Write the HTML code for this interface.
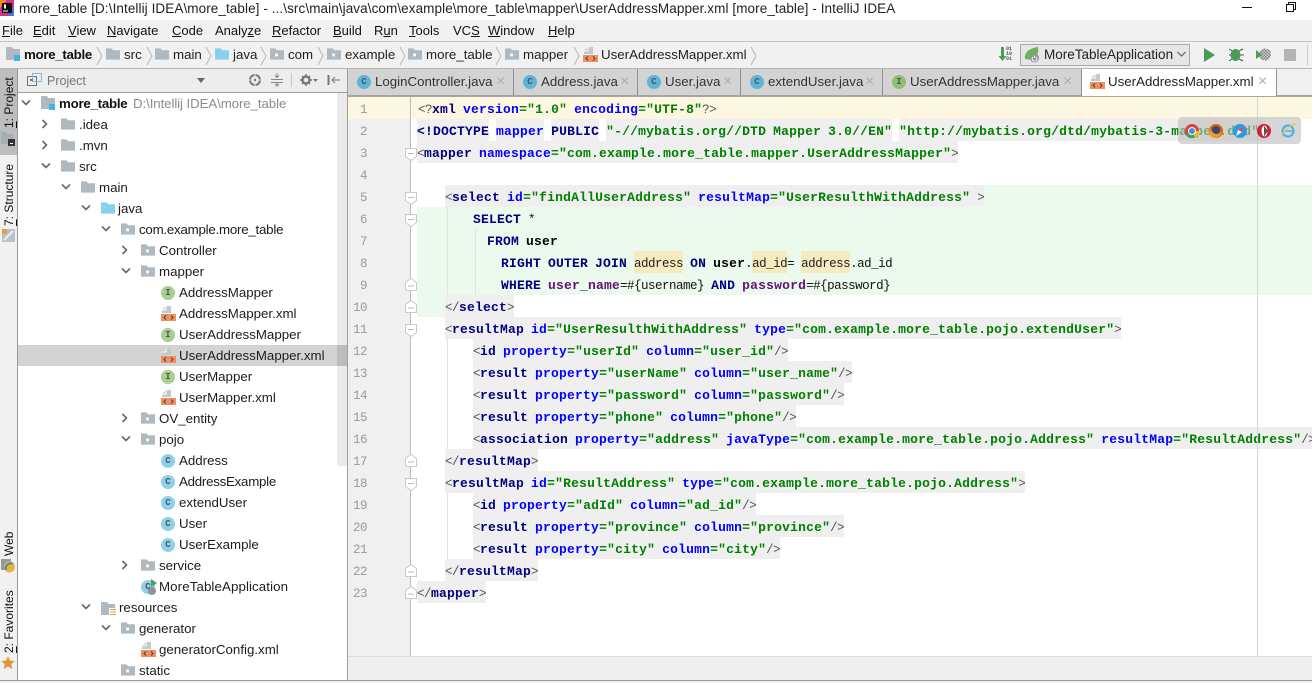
<!DOCTYPE html>
<html><head><meta charset="utf-8"><style>
html,body{margin:0;padding:0}
body{width:1312px;height:683px;overflow:hidden;position:relative;background:#fff;font-family:"Liberation Sans",sans-serif;color:#111}
.a{position:absolute}
.m{position:absolute;top:20px;height:21px;line-height:21px;font-size:13px;color:#111;white-space:pre}
.m u{text-decoration:underline}
.bc{position:absolute;top:42px;height:26px;line-height:26px;font-size:13.3px;color:#222;white-space:pre}
.sep{position:absolute;top:46px}
.tt{position:absolute;top:71px;height:22px;line-height:22px;font-size:13.3px;color:#333;white-space:pre}
.x{position:absolute;top:71px;line-height:22px;font-size:16px;color:#adadad}
.r{position:absolute;height:21px;line-height:21px;font-size:13.3px;color:#1c1c1c;white-space:pre}
.ic{position:absolute;width:14px;height:14px;border-radius:50%;font:bold 9px/14px "Liberation Mono",monospace;text-align:center;color:#555}
.C{background:#8fd1ea}
.I{background:#a5d08f}
.ln{position:absolute;left:348px;width:19px;height:22px;text-align:right;font:12.5px/24px "Liberation Mono",monospace;letter-spacing:-.5px;color:#999}
.c{position:absolute;left:417px;height:22px;white-space:pre;font:bold 13px/26px "Liberation Mono",monospace;letter-spacing:.2px;word-spacing:-1px;color:#000080}
.c span{display:inline-block;height:22px;vertical-align:top}
.g{background:#efefef}
i{font-style:normal}
.p,.t,.o{font-weight:normal;font-size:12.5px;letter-spacing:-.5px;word-spacing:0}
.p{color:#555}
.n{color:#000080}
.e{color:#0000ff}
.s{color:#008000}
.t{color:#111}
.k{color:#000}
.v{color:#660e7a}
.o{background:#f6ebbf;color:#222}
.f{position:absolute;left:405px}
.gd{position:absolute;width:1px;background:#e2e2e2}
.vt{position:absolute;left:2px;width:15px;writing-mode:vertical-rl;transform:rotate(180deg);font-size:12px;line-height:15px;color:#111;white-space:pre;text-align:left}
</style></head><body>
<svg width="0" height="0" style="position:absolute"><defs>
<symbol id="fo" viewBox="0 0 15 12"><path d="M0 0h6l1.5 2H15v10H0z" fill="#b0b9bf"/></symbol>
<symbol id="pk" viewBox="0 0 15 12"><path d="M0 0h6l1.5 2H15v10H0z" fill="#b0b9bf"/><rect x="5.5" y="5.5" width="3" height="3" fill="#fff"/></symbol>
<symbol id="bl" viewBox="0 0 15 12"><path d="M0 0h6l1.5 2H15v10H0z" fill="#87d0ee"/></symbol>
<symbol id="mo" viewBox="0 0 15 15"><path d="M0 0h6l1.5 2H14v11H0z" fill="#b0b9bf"/><rect x="8" y="8" width="6" height="6" fill="#40b6e0"/></symbol>
<symbol id="xm" viewBox="0 0 15 15"><path d="M5 0h5v7H1V4z" fill="#c3c8cc"/><path d="M5 0v4H1" fill="none" stroke="#fff"/><rect y="8" width="15" height="7" fill="#f0905f"/><path d="M5 9.5l-2 2 2 2M10 9.5l2 2-2 2" stroke="#444" fill="none"/></symbol>
<symbol id="rt" viewBox="0 0 8 10"><path d="M1.5 1l4 4-4 4" stroke="#666" stroke-width="1.6" fill="none"/></symbol>
<symbol id="dn" viewBox="0 0 10 8"><path d="M1 1.5l4 4 4-4" stroke="#666" stroke-width="1.6" fill="none"/></symbol>
<symbol id="fd" viewBox="0 0 12 18"><path d="M.5 .5h11v8l-5.500 4-5.500-4z" fill="#fff" stroke="#c9c9c9"/><path d="M3 5.500h6" stroke="#bbb"/></symbol>
<symbol id="fu" viewBox="0 0 12 18"><path d="M.5 13.500h11v-8l-5.500-4-5.500 4z" fill="#fff" stroke="#c9c9c9"/><path d="M3 9h6" stroke="#bbb"/></symbol>
<symbol id="ch" viewBox="0 0 8 20"><path d="M1 1l5 9-5 9" stroke="#b5b5b5" fill="none"/></symbol>
<pattern id="chk" width="3" height="3" patternUnits="userSpaceOnUse"><rect width="3" height="3" fill="#d8d8d8"/><rect width="1.500" height="1.500" fill="#777"/><rect x="1.500" y="1.500" width="1.500" height="1.500" fill="#777"/></pattern>
</defs></svg>

<!-- title bar -->
<svg class="a" style="left:0;top:0" width="14" height="16" viewBox="0 0 14 16"><rect x="0" y="0" width="14" height="16" fill="#d0318a"/><path d="M0 0h7L0 8z" fill="#f08a24"/><path d="M14 16V6l-6 10z" fill="#3a7be0"/><rect x="2" y="3" width="10" height="10" fill="#111"/><rect x="3" y="10.500" width="5" height="1" fill="#fff"/><rect x="4" y="4.500" width="2" height="4" fill="#fff"/></svg>
<div class="a" style="left:19px;top:0;height:17px;line-height:17px;font-size:13.5px;letter-spacing:.085px;color:#222;white-space:pre">more_table [D:\Intellij IDEA\more_table] - ...\src\main\java\com\example\more_table\mapper\UserAddressMapper.xml [more_table] - IntelliJ IDEA</div>
<div class="a" style="left:1242px;top:7px;width:10px;height:1px;background:#111"></div>
<svg class="a" style="left:1286px;top:2px" width="10" height="10"><path d="M.5 2.500h7v7h-7zM2.500 2.500v-2h7v7h-2" fill="#fff" stroke="#111"/></svg>

<!-- menu -->
<div class="a" style="left:0;top:20px;width:1312px;height:21px;background:#f1f1f1;border-bottom:1px solid #c5c5c5"></div>
<div class="m" style="left:2px"><u>F</u>ile</div>
<div class="m" style="left:33px"><u>E</u>dit</div>
<div class="m" style="left:68px"><u>V</u>iew</div>
<div class="m" style="left:107px"><u>N</u>avigate</div>
<div class="m" style="left:172px"><u>C</u>ode</div>
<div class="m" style="left:215px">Analy<u>z</u>e</div>
<div class="m" style="left:272px"><u>R</u>efactor</div>
<div class="m" style="left:333px"><u>B</u>uild</div>
<div class="m" style="left:374px">R<u>u</u>n</div>
<div class="m" style="left:409px"><u>T</u>ools</div>
<div class="m" style="left:453px">VC<u>S</u></div>
<div class="m" style="left:488px"><u>W</u>indow</div>
<div class="m" style="left:548px"><u>H</u>elp</div>

<!-- breadcrumb -->
<div class="a" style="left:0;top:42px;width:1312px;height:26px;background:#f1f1f1;border-bottom:1px solid #b5b5b5"></div>
<svg class="a" style="left:6px;top:47px" width="15" height="15"><use href="#mo"/></svg>
<div class="bc" style="left:24px;font-weight:bold;color:#111;letter-spacing:-.3px">more_table</div>
<svg class="sep" style="left:96px" width="8" height="20"><use href="#ch"/></svg>
<svg class="a" style="left:106px;top:48px" width="14" height="12"><use href="#fo"/></svg>
<div class="bc" style="left:124px">src</div>
<svg class="sep" style="left:146px" width="8" height="20"><use href="#ch"/></svg>
<svg class="a" style="left:155px;top:48px" width="14" height="12"><use href="#fo"/></svg>
<div class="bc" style="left:173px">main</div>
<svg class="sep" style="left:205px" width="8" height="20"><use href="#ch"/></svg>
<svg class="a" style="left:215px;top:48px" width="14" height="12"><use href="#bl"/></svg>
<div class="bc" style="left:233px">java</div>
<svg class="sep" style="left:260px" width="8" height="20"><use href="#ch"/></svg>
<svg class="a" style="left:270px;top:48px" width="14" height="12"><use href="#pk"/></svg>
<div class="bc" style="left:288px">com</div>
<svg class="sep" style="left:317px" width="8" height="20"><use href="#ch"/></svg>
<svg class="a" style="left:327px;top:48px" width="14" height="12"><use href="#pk"/></svg>
<div class="bc" style="left:345px">example</div>
<svg class="sep" style="left:399px" width="8" height="20"><use href="#ch"/></svg>
<svg class="a" style="left:408px;top:48px" width="14" height="12"><use href="#pk"/></svg>
<div class="bc" style="left:426px">more_table</div>
<svg class="sep" style="left:495px" width="8" height="20"><use href="#ch"/></svg>
<svg class="a" style="left:505px;top:48px" width="14" height="12"><use href="#pk"/></svg>
<div class="bc" style="left:523px">mapper</div>
<svg class="sep" style="left:573px" width="8" height="20"><use href="#ch"/></svg>
<svg class="a" style="left:583px;top:47px" width="15" height="15"><use href="#xm"/></svg>
<div class="bc" style="left:601px">UserAddressMapper.xml</div>
<svg class="sep" style="left:750px" width="8" height="20"><use href="#ch"/></svg>

<!-- toolbar right -->
<svg class="a" style="left:998px;top:46px" width="16" height="17"><path d="M3 1h3v9h2.500L4.500 15 .5 10H3z" fill="#4a9e55"/></svg>
<div class="a" style="left:1006px;top:47px;font:bold 5px/5px 'Liberation Mono',monospace;color:#555;white-space:pre">01
10
01</div>
<div class="a" style="left:1020px;top:44px;width:168px;height:20px;background:#e6e6e6;border:1px solid #a9a9a9"></div>
<svg class="a" style="left:1024px;top:47px" width="16" height="16"><path d="M1 12C0 5 6 1 14 0c1 7-2 12-6 13z" fill="#6cb35a"/><circle cx="10.500" cy="11" r="4.500" fill="#8a9499"/><path d="M10.500 8.500v2.500M8.800 10a2.400 2.400 0 1 0 3.400 0" stroke="#fff" fill="none"/></svg>
<div class="a" style="left:1044px;top:44px;height:22px;line-height:22px;font-size:13.5px;color:#222;white-space:pre">MoreTableApplication</div>
<svg class="a" style="left:1177px;top:51px" width="9" height="7"><path d="M.5 1l4 4 4-4" stroke="#555" fill="none"/></svg>
<svg class="a" style="left:1203px;top:48px" width="13" height="14"><path d="M1 0l11 7-11 7z" fill="#499c54"/></svg>
<svg class="a" style="left:1229px;top:47px" width="15" height="15"><ellipse cx="6.500" cy="8" rx="5" ry="6" fill="#499c54"/><path d="M10 4l4-2M11 8h4M10 12l4 2M3 4L0 2M2 8H0M3 12l-3 2" stroke="#555"/></svg>
<svg class="a" style="left:1256px;top:47px" width="15" height="15"><circle cx="9" cy="7.500" r="6" fill="url(#chk)"/><path d="M0 3l6 4.500L0 12z" fill="#499c54"/></svg>
<div class="a" style="left:1284px;top:49px;width:12px;height:12px;background:#b4b4b4"></div>
<div class="a" style="left:1307px;top:45px;width:1px;height:21px;background:#cfcfcf"></div>

<!-- left strip -->
<div class="a" style="left:0;top:69px;width:17px;height:611px;background:#f1f1f1;border-right:1px solid #9a9a9a"></div>
<div class="a" style="left:0;top:69px;width:17px;height:86px;background:#bdbdbd"></div>
<div class="vt" style="top:78px;height:50px"><u>1</u>: Project</div>
<svg class="a" style="left:1px;top:132px" width="14" height="14"><path d="M0 0h5l1 2h6v10H0z" fill="#a4aeb5"/><rect x="7" y="7" width="7" height="7" fill="#333"/><rect x="9" y="11" width="3" height="1" fill="#fff"/></svg>
<div class="vt" style="top:164px;height:62px"><u>7</u>: Structure</div>
<svg class="a" style="left:2px;top:229px" width="13" height="13"><rect width="13" height="13" fill="#b7c2c9"/><rect width="5" height="5" fill="#e0a040"/><path d="M2 11L11 2" stroke="#eee" stroke-width="2"/></svg>
<div class="vt" style="top:532px;height:24px">Web</div>
<svg class="a" style="left:1px;top:559px" width="14" height="14"><rect x="0" y="0" width="10" height="11" fill="#999"/><circle cx="8.500" cy="8" r="5.500" fill="#e8b53a"/><path d="M5 11a5 5 0 0 1 7-6" stroke="#3a8fc0" stroke-width="2" fill="none"/></svg>
<div class="vt" style="top:593px;height:60px"><u>2</u>: Favorites</div>
<svg class="a" style="left:1px;top:656px" width="14" height="13"><path d="M7 0l2 4.500 5 .5-3.700 3.300 1 4.700L7 10.500 2.700 13l1-4.700L0 5l5-.5z" fill="#e2973c"/></svg>

<!-- project panel header -->
<div class="a" style="left:18px;top:69px;width:329px;height:23px;background:#ededed;border-bottom:1px solid #9f9f9f"></div>
<svg class="a" style="left:27px;top:73px" width="15" height="14"><rect x=".5" y="3.500" width="9" height="9" fill="#eee" stroke="#777"/><rect x="5.500" y=".5" width="9" height="8" fill="none" stroke="#8bb6d6"/><path d="M3 6h3v2H3z" fill="#777"/></svg>
<div class="a" style="left:47px;top:70px;height:22px;line-height:22px;font-size:12.500px;color:#777">Project</div>
<svg class="a" style="left:197px;top:78px" width="8" height="5"><path d="M0 0h8L4 5z" fill="#666"/></svg>
<svg class="a" style="left:248px;top:73px" width="14" height="14"><circle cx="7" cy="7" r="5" fill="none" stroke="#777" stroke-width="2"/><path d="M7 0v4M7 10v4M0 7h4M10 7h4" stroke="#ededed" stroke-width="1"/><circle cx="7" cy="7" r="1.200" fill="#777"/></svg>
<svg class="a" style="left:270px;top:73px" width="14" height="14"><path d="M1 6.500h12M1 9.500h12" stroke="#888"/><path d="M7 0v4M5 2.500l2 2 2-2M7 15v-4M5 12.500l2-2 2 2" stroke="#888" fill="none"/></svg>
<div class="a" style="left:291px;top:73px;width:1px;height:14px;background:#c8c8c8"></div>
<svg class="a" style="left:300px;top:74px" width="18" height="12"><circle cx="6" cy="6" r="3.500" fill="none" stroke="#777" stroke-width="2.400"/><path d="M6 0v2M6 10v2M0 6h2M10 6h2M2 2l1.500 1.500M10 2L8.500 3.500M2 10l1.500-1.500M10 10L8.500 8.500" stroke="#777" stroke-width="1.400"/><path d="M13 5h5l-2.500 3z" fill="#777"/></svg>
<svg class="a" style="left:327px;top:74px" width="13" height="12"><path d="M1.500 1v10" stroke="#777" stroke-width="2"/><path d="M5 6h8M8 3L5 6l3 3" stroke="#777" fill="none"/></svg>
<div class="a" style="left:347px;top:69px;width:1px;height:611px;background:#9f9f9f"></div>

<!-- tree -->
<div class="a" style="left:18px;top:345px;width:329px;height:21px;background:#d3d3d3"></div>
<div class="a" style="left:337px;top:93px;width:10px;height:373px;background:#ebebeb"></div>
<div class="a" style="left:337px;top:345px;width:10px;height:21px;background:#bcbcbc"></div>

<svg class="a" style="left:21px;top:99px" width="10" height="8"><use href="#dn"/></svg>
<svg class="a" style="left:41px;top:96px" width="15" height="15"><use href="#mo"/></svg>
<div class="r" style="left:59px;top:93px;font-weight:bold;color:#111;letter-spacing:-.25px">more_table</div>
<div class="r" style="left:133px;top:93px;color:#8c8c8c;letter-spacing:-.1px">D:\Intellij IDEA\more_table</div>

<svg class="a" style="left:41px;top:119px" width="8" height="10"><use href="#rt"/></svg>
<svg class="a" style="left:61px;top:118px" width="14" height="12"><use href="#fo"/></svg>
<div class="r" style="left:79px;top:114px">.idea</div>
<svg class="a" style="left:41px;top:140px" width="8" height="10"><use href="#rt"/></svg>
<svg class="a" style="left:61px;top:139px" width="14" height="12"><use href="#fo"/></svg>
<div class="r" style="left:79px;top:135px">.mvn</div>
<svg class="a" style="left:41px;top:162px" width="10" height="8"><use href="#dn"/></svg>
<svg class="a" style="left:61px;top:160px" width="14" height="12"><use href="#fo"/></svg>
<div class="r" style="left:79px;top:156px">src</div>
<svg class="a" style="left:61px;top:183px" width="10" height="8"><use href="#dn"/></svg>
<svg class="a" style="left:81px;top:181px" width="14" height="12"><use href="#fo"/></svg>
<div class="r" style="left:99px;top:177px">main</div>
<svg class="a" style="left:81px;top:204px" width="10" height="8"><use href="#dn"/></svg>
<svg class="a" style="left:101px;top:202px" width="14" height="12"><use href="#bl"/></svg>
<div class="r" style="left:118px;top:198px">java</div>
<svg class="a" style="left:101px;top:225px" width="10" height="8"><use href="#dn"/></svg>
<svg class="a" style="left:121px;top:223px" width="14" height="12"><use href="#pk"/></svg>
<div class="r" style="left:139px;top:219px;letter-spacing:-.23px">com.example.more_table</div>
<svg class="a" style="left:121px;top:245px" width="8" height="10"><use href="#rt"/></svg>
<svg class="a" style="left:141px;top:244px" width="14" height="12"><use href="#pk"/></svg>
<div class="r" style="left:159px;top:240px">Controller</div>
<svg class="a" style="left:121px;top:267px" width="10" height="8"><use href="#dn"/></svg>
<svg class="a" style="left:141px;top:265px" width="14" height="12"><use href="#pk"/></svg>
<div class="r" style="left:159px;top:261px">mapper</div>

<div class="ic I" style="left:161px;top:286px">I</div><div class="r" style="left:179px;top:282px">AddressMapper</div>
<svg class="a" style="left:161px;top:306px" width="15" height="15"><use href="#xm"/></svg><div class="r" style="left:179px;top:303px">AddressMapper.xml</div>
<div class="ic I" style="left:161px;top:328px">I</div><div class="r" style="left:179px;top:324px">UserAddressMapper</div>
<svg class="a" style="left:161px;top:348px" width="15" height="15"><use href="#xm"/></svg><div class="r" style="left:179px;top:345px">UserAddressMapper.xml</div>
<div class="ic I" style="left:161px;top:370px">I</div><div class="r" style="left:179px;top:366px">UserMapper</div>
<svg class="a" style="left:161px;top:390px" width="15" height="15"><use href="#xm"/></svg><div class="r" style="left:179px;top:387px">UserMapper.xml</div>

<svg class="a" style="left:121px;top:413px" width="8" height="10"><use href="#rt"/></svg>
<svg class="a" style="left:141px;top:412px" width="14" height="12"><use href="#pk"/></svg>
<div class="r" style="left:159px;top:408px">OV_entity</div>
<svg class="a" style="left:121px;top:435px" width="10" height="8"><use href="#dn"/></svg>
<svg class="a" style="left:141px;top:433px" width="14" height="12"><use href="#pk"/></svg>
<div class="r" style="left:159px;top:429px">pojo</div>

<div class="ic C" style="left:161px;top:454px">C</div><div class="r" style="left:179px;top:450px">Address</div>
<div class="ic C" style="left:161px;top:475px">C</div><div class="r" style="left:179px;top:471px;letter-spacing:-.25px">AddressExample</div>
<div class="ic C" style="left:161px;top:496px">C</div><div class="r" style="left:179px;top:492px">extendUser</div>
<div class="ic C" style="left:161px;top:517px">C</div><div class="r" style="left:179px;top:513px">User</div>
<div class="ic C" style="left:161px;top:538px">C</div><div class="r" style="left:179px;top:534px">UserExample</div>

<svg class="a" style="left:121px;top:560px" width="8" height="10"><use href="#rt"/></svg>
<svg class="a" style="left:141px;top:559px" width="14" height="12"><use href="#pk"/></svg>
<div class="r" style="left:159px;top:555px">service</div>
<div class="ic C" style="left:141px;top:580px">C</div>
<svg class="a" style="left:147px;top:578px" width="10" height="18"><path d="M4 1l6 4-6 4z" fill="#4aa54a"/><circle cx="5" cy="13" r="4" fill="#8a9499"/></svg>
<div class="r" style="left:159px;top:576px;letter-spacing:.1px">MoreTableApplication</div>

<svg class="a" style="left:81px;top:603px" width="10" height="8"><use href="#dn"/></svg>
<svg class="a" style="left:101px;top:602px" width="15" height="14"><path d="M0 0h6l1.500 2H14v11H0z" fill="#b0b9bf"/><rect x="8" y="6" width="7" height="8" fill="#fff"/><path d="M9 7.500h6M9 10h6M9 12.500h6" stroke="#d5a04c"/></svg>
<div class="r" style="left:119px;top:597px">resources</div>
<svg class="a" style="left:101px;top:624px" width="10" height="8"><use href="#dn"/></svg>
<svg class="a" style="left:121px;top:622px" width="14" height="12"><use href="#pk"/></svg>
<div class="r" style="left:139px;top:618px">generator</div>
<svg class="a" style="left:141px;top:642px" width="15" height="15"><use href="#xm"/></svg>
<div class="r" style="left:159px;top:639px">generatorConfig.xml</div>
<svg class="a" style="left:121px;top:664px" width="14" height="12"><use href="#pk"/></svg>
<div class="r" style="left:139px;top:660px">static</div>

<!-- tabs -->
<div class="a" style="left:348px;top:69px;width:964px;height:26px;background:#f1f1f1"></div>
<div class="a" style="left:348px;top:69px;width:733px;height:26px;background:#d3d3d3"></div>
<div class="a" style="left:348px;top:95px;width:964px;height:2px;background:#a5a5a5"></div>
<div class="a" style="left:513px;top:69px;width:1px;height:26px;background:#8f8f8f"></div>
<div class="a" style="left:637px;top:69px;width:1px;height:26px;background:#8f8f8f"></div>
<div class="a" style="left:740px;top:69px;width:1px;height:26px;background:#8f8f8f"></div>
<div class="a" style="left:882px;top:69px;width:1px;height:26px;background:#8f8f8f"></div>
<div class="a" style="left:1081px;top:69px;width:194px;height:27px;background:#fff;border-left:1px solid #8f8f8f;border-right:1px solid #8f8f8f"></div>
<div class="ic C" style="left:357px;top:75px;background:#5db5d8">C</div><div class="tt" style="left:375px">LoginController.java</div><div class="x" style="left:496px">×</div>
<div class="ic C" style="left:523px;top:75px;background:#5db5d8">C</div><div class="tt" style="left:541px">Address.java</div><div class="x" style="left:620px">×</div>
<div class="ic C" style="left:647px;top:75px;background:#5db5d8">C</div><div class="tt" style="left:665px">User.java</div><div class="x" style="left:723px">×</div>
<div class="ic C" style="left:750px;top:75px;background:#5db5d8">C</div><div class="tt" style="left:768px">extendUser.java</div><div class="x" style="left:865px">×</div>
<div class="ic I" style="left:892px;top:75px;background:#8fbf74">I</div><div class="tt" style="left:910px">UserAddressMapper.java</div><div class="x" style="left:1063px">×</div>
<svg class="a" style="left:1090px;top:74px" width="15" height="15"><use href="#xm"/></svg><div class="tt" style="left:1108px;color:#222">UserAddressMapper.xml</div><div class="x" style="left:1258px">×</div>

<!-- gutter -->
<div class="a" style="left:348px;top:97px;width:62px;height:559px;background:#f0f0f0"></div>
<div class="a" style="left:348px;top:97px;width:964px;height:22px;background:#fdf7e2"></div>
<div class="a" style="left:410px;top:97px;width:1px;height:559px;background:#bdbdbd"></div>
<div class="a" style="left:348px;top:656px;width:964px;height:1px;background:#dedede"></div>
<div class="a" style="left:348px;top:657px;width:964px;height:23px;background:#efefef"></div>
<div class="a" style="left:0;top:680px;width:1312px;height:1px;background:#999"></div>
<div class="a" style="left:0;top:681px;width:1312px;height:2px;background:#f1f1f1"></div>

<!-- green -->
<div class="a" style="left:417px;top:207px;width:895px;height:88px;background:#ebfaec"></div>
<div class="a" style="left:984px;top:185px;width:328px;height:22px;background:#ebfaec"></div>
<div class="a" style="left:417px;top:295px;width:28px;height:22px;background:#ebfaec"></div>

<!-- line numbers -->
<div class="ln" style="top:98px">1</div><div class="ln" style="top:120px">2</div><div class="ln" style="top:142px">3</div><div class="ln" style="top:164px">4</div><div class="ln" style="top:186px">5</div><div class="ln" style="top:208px">6</div><div class="ln" style="top:230px">7</div><div class="ln" style="top:252px">8</div><div class="ln" style="top:274px">9</div><div class="ln" style="top:296px">10</div><div class="ln" style="top:318px">11</div><div class="ln" style="top:340px">12</div><div class="ln" style="top:362px">13</div><div class="ln" style="top:384px">14</div><div class="ln" style="top:406px">15</div><div class="ln" style="top:428px">16</div><div class="ln" style="top:450px">17</div><div class="ln" style="top:472px">18</div><div class="ln" style="top:494px">19</div><div class="ln" style="top:516px">20</div><div class="ln" style="top:538px">21</div><div class="ln" style="top:560px">22</div><div class="ln" style="top:582px">23</div>

<!-- indent guides -->
<div class="gd" style="left:447px;top:207px;height:88px"></div>
<div class="gd" style="left:475px;top:229px;height:66px"></div>
<div class="gd" style="left:447px;top:339px;height:110px"></div>
<div class="gd" style="left:447px;top:493px;height:66px"></div>

<!-- code -->
<div class="c" style="top:97px;left:418px"><i class="p">&lt;?</i><i class="n">xml</i> <i class="e">version</i><i class="s">="1.0"</i> <i class="e">encoding</i><i class="s">="UTF-8"</i><i class="p">?&gt;</i></div>
<div class="c" style="top:119px"><span class="g">&lt;!DOCTYPE</span> <span class="g e">mapper</span> <span class="g n">PUBLIC</span> <span class="g s">"-//mybatis.org//DTD Mapper 3.0//EN"</span> <span class="g s">"http://mybatis.org/dtd/mybatis-3-mapper.dtd"</span><span class="g p">&gt;</span></div>
<div class="c" style="top:141px"><span class="g"><i class="p">&lt;</i>mapper <i class="e">namespace</i><i class="s">="com.example.more_table.mapper.UserAddressMapper"</i><i class="p">&gt;</i></span></div>
<div class="c" style="top:185px">    <span class="g"><i class="p">&lt;</i>select <i class="e">id</i><i class="s">="findAllUserAddress"</i> <i class="e">resultMap</i><i class="s">="UserResulthWithAddress"</i> <i class="p">&gt;</i></span></div>
<div class="c" style="top:207px">        SELECT <i class="t">*</i></div>
<div class="c" style="top:229px">          FROM <i class="k">user</i></div>
<div class="c" style="top:251px">            RIGHT OUTER JOIN <span class="o">address</span> ON <i class="k">user</i><i class="t">.</i><span class="o">ad_id</span><i class="t">= </i><span class="o">address</span><i class="t">.ad_id</i></div>
<div class="c" style="top:273px">            WHERE <i class="v">user_name</i><i class="t">=#{username}</i> AND <i class="v">password</i><i class="t">=#{password}</i></div>
<div class="c" style="top:295px">    <span class="g"><i class="p">&lt;/</i>select<i class="p">&gt;</i></span></div>
<div class="c" style="top:317px">    <span class="g"><i class="p">&lt;</i>resultMap <i class="e">id</i><i class="s">="UserResulthWithAddress"</i> <i class="e">type</i><i class="s">="com.example.more_table.pojo.extendUser"</i><i class="p">&gt;</i></span></div>
<div class="c" style="top:339px">        <span class="g"><i class="p">&lt;</i>id <i class="e">property</i><i class="s">="userId"</i> <i class="e">column</i><i class="s">="user_id"</i><i class="p">/&gt;</i></span></div>
<div class="c" style="top:361px">        <span class="g"><i class="p">&lt;</i>result <i class="e">property</i><i class="s">="userName"</i> <i class="e">column</i><i class="s">="user_name"</i><i class="p">/&gt;</i></span></div>
<div class="c" style="top:383px">        <span class="g"><i class="p">&lt;</i>result <i class="e">property</i><i class="s">="password"</i> <i class="e">column</i><i class="s">="password"</i><i class="p">/&gt;</i></span></div>
<div class="c" style="top:405px">        <span class="g"><i class="p">&lt;</i>result <i class="e">property</i><i class="s">="phone"</i> <i class="e">column</i><i class="s">="phone"</i><i class="p">/&gt;</i></span></div>
<div class="c" style="top:427px">        <span class="g"><i class="p">&lt;</i>association <i class="e">property</i><i class="s">="address"</i> <i class="e">javaType</i><i class="s">="com.example.more_table.pojo.Address"</i> <i class="e">resultMap</i><i class="s">="ResultAddress"</i><i class="p">/&gt;</i></span></div>
<div class="c" style="top:449px">    <span class="g"><i class="p">&lt;/</i>resultMap<i class="p">&gt;</i></span></div>
<div class="c" style="top:471px">    <span class="g"><i class="p">&lt;</i>resultMap <i class="e">id</i><i class="s">="ResultAddress"</i> <i class="e">type</i><i class="s">="com.example.more_table.pojo.Address"</i><i class="p">&gt;</i></span></div>
<div class="c" style="top:493px">        <span class="g"><i class="p">&lt;</i>id <i class="e">property</i><i class="s">="adId"</i> <i class="e">column</i><i class="s">="ad_id"</i><i class="p">/&gt;</i></span></div>
<div class="c" style="top:515px">        <span class="g"><i class="p">&lt;</i>result <i class="e">property</i><i class="s">="province"</i> <i class="e">column</i><i class="s">="province"</i><i class="p">/&gt;</i></span></div>
<div class="c" style="top:537px">        <span class="g"><i class="p">&lt;</i>result <i class="e">property</i><i class="s">="city"</i> <i class="e">column</i><i class="s">="city"</i><i class="p">/&gt;</i></span></div>
<div class="c" style="top:559px">    <span class="g"><i class="p">&lt;/</i>resultMap<i class="p">&gt;</i></span></div>
<div class="c" style="top:581px"><span class="g"><i class="p">&lt;/</i>mapper<i class="p">&gt;</i></span></div>

<!-- fold markers -->
<svg class="f" style="top:148px" width="12" height="18"><use href="#fd"/></svg>
<svg class="f" style="top:192px" width="12" height="18"><use href="#fd"/></svg>
<svg class="f" style="top:214px" width="12" height="18"><use href="#fd"/></svg>
<svg class="f" style="top:277px" width="12" height="18"><use href="#fu"/></svg>
<svg class="f" style="top:299px" width="12" height="18"><use href="#fu"/></svg>
<svg class="f" style="top:324px" width="12" height="18"><use href="#fd"/></svg>
<svg class="f" style="top:453px" width="12" height="18"><use href="#fu"/></svg>
<svg class="f" style="top:478px" width="12" height="18"><use href="#fd"/></svg>
<svg class="f" style="top:563px" width="12" height="18"><use href="#fu"/></svg>
<svg class="f" style="top:585px" width="12" height="18"><use href="#fu"/></svg>

<!-- right margin -->
<div class="a" style="left:1257px;top:97px;width:1px;height:559px;background:#d6d6d6"></div>

<!-- browser popup -->
<div class="a" style="left:1178px;top:117px;width:123px;height:27px;background:rgba(190,190,190,.62);border-radius:4px"></div>
<svg class="a" style="left:1184px;top:123px" width="112" height="16" viewBox="0 0 112 16">
<circle cx="8" cy="8" r="7" fill="#db4437"/><path d="M8 8L2 12a7 7 0 0 0 9 2.500z" fill="#3aa757"/><path d="M8 8l3 6.500A7 7 0 0 0 15 8z" fill="#f4c20d"/><circle cx="8" cy="8" r="3.500" fill="#4a90e2" stroke="#fff"/>
<circle cx="32" cy="8" r="7" fill="#e66000"/><circle cx="32" cy="7" r="4" fill="#2a4a8f"/><path d="M26 5c2 6 7 8 12 4-1 6-10 8-13 2z" fill="#f79a1c"/>
<circle cx="56" cy="8" r="7" fill="#2a9ae8"/><path d="M60 3l-6 4-2 6 6-4z" fill="#fff"/><path d="M60 3l-6 4 4 2z" fill="#e8433c"/>
<circle cx="80" cy="8" r="7" fill="#d3202f"/><ellipse cx="80.500" cy="8" rx="3" ry="5.500" fill="#fff"/><path d="M80 2.500l4 5.500-4 5.500z" fill="#555"/>
<circle cx="104" cy="8" r="5.500" fill="none" stroke="#4ab3e8" stroke-width="2.200"/><path d="M100 8h9" stroke="#4ab3e8" stroke-width="1.500"/><path d="M98 14c-1-3 6-11 13-13-3-1-2 0 0 2" fill="none" stroke="#e6c84a"/>
</svg>
</body></html>
